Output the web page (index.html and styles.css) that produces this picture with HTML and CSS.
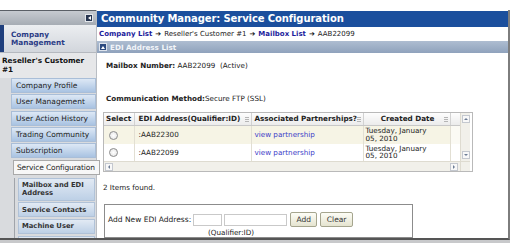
FILE: index.html
```html
<!DOCTYPE html>
<html lang="en">
<head>
    <meta charset="UTF-8">
    <title>Community Manager: Service Configuration</title>
    <link rel="stylesheet" href="styles.css">
</head>
<body>

    <div class="app">
        <div class="side">
            <div class="side-top"><span class="collapse"></span></div>
            <div class="company">Company Management</div>
            <div class="customer">Reseller's Customer #1</div>
            <ul class="nav">
                <li>Company Profile</li>
                <li>User Management</li>
                <li>User Action History</li>
                <li>Trading Community</li>
                <li>Subscription</li>
                <li class="on">Service Configuration</li>
            </ul>
            <ul class="subnav">
                <li>Mailbox and EDI Address</li>
                <li>Service Contacts</li>
                <li>Machine User</li>
                <li></li>
            </ul>
        </div>

        <div class="main">
            <div class="title">Community Manager: Service Configuration</div>
            <div class="crumbs">
                <a href="#">Company List</a><span class="arrow">&#10132;</span>Reseller's Customer #1<span class="arrow">&#10132;</span><a href="#">Mailbox List</a><span class="arrow">&#10132;</span>AAB22099
            </div>
            <div class="panel-head"><span class="toggle"></span>EDI Address List</div>
            <div class="panel-body">
                <p class="mailbox"><b>Mailbox Number:</b> AAB22099&nbsp; (Active)</p>
                <p class="method"><b>Communication Method:</b>Secure FTP (SSL)</p>

                <div class="grid">
                    <table>
                        <colgroup>
                            <col style="width:30px">
                            <col style="width:117px">
                            <col style="width:112px">
                            <col style="width:87px">
                            <col style="width:10px">
                        </colgroup>
                        <tr class="head">
                            <th>Select</th>
                            <th class="edi">EDI Address(Qualifier:ID)<span class="sort"></span></th>
                            <th class="assoc">Associated Partnerships?<span class="sort"></span></th>
                            <th class="created">Created Date<span class="sort"></span></th>
                            <th class="blank"></th>
                        </tr>
                        <tr class="odd">
                            <td class="sel"><span class="radio"></span></td>
                            <td class="edi">:AAB22300</td>
                            <td class="assoc"><a href="#">view partnership</a></td>
                            <td class="date">Tuesday, January 05, 2010</td>
                            <td class="blank"></td>
                        </tr>
                        <tr>
                            <td class="sel"><span class="radio"></span></td>
                            <td class="edi">:AAB22099</td>
                            <td class="assoc"><a href="#">view partnership</a></td>
                            <td class="date">Tuesday, January 05, 2010</td>
                            <td class="blank"></td>
                        </tr>
                    </table>
                    <div class="vscroll"><span class="arr up"></span><span class="arr down"></span></div>
                    <div class="hscroll"><span class="arr left"></span><span class="arr right"></span></div>
                    <div class="corner"></div>
                </div>

                <p class="found">2 Items found.</p>

                <div class="add-box">
                    <div class="add-row">
                        <label>Add New EDI Address:</label>
                        <input class="q" type="text">
                        <input class="id" type="text">
                        <button class="add">Add</button>
                        <button class="clear">Clear</button>
                    </div>
                    <div class="hint">(Qualifier:ID)</div>
                </div>
            </div>
        </div>
    </div>
    <div class="foot"></div>

</body>
</html>
```

FILE: styles.css
```css
*{
    margin: 0;
    padding: 0;
}

ul{
    list-style: none;
}

body{
    padding-top: 10px;
    background: #fff;
    color: #222;
    font-family: "DejaVu Sans", Verdana, sans-serif;
}

.app{
    display: flex;
    width: 510px;
    height: 230px;
    box-sizing: border-box;
    border-right: 2px solid #7d7d7d;
    border-bottom: 2px solid #555;
    overflow: hidden;
}

/* left menu */
.side{
    flex: none;
    width: 96px;
    background: #d9dbde;
    border-top: 1px solid #5a5f66;
}

.side-top{
    display: flex;
    justify-content: flex-end;
    align-items: center;
    height: 14px;
    padding-right: 3px;
    background: linear-gradient(#c6cad0, #a6acb4);
}

.collapse{
    display: flex;
    justify-content: center;
    align-items: center;
    width: 6px;
    height: 6px;
    background: #26344f;
    border: 1px solid #e3e6eb;
}

.collapse:after{
    content: '';
    border-right: 3px solid #fff;
    border-top: 2px solid transparent;
    border-bottom: 2px solid transparent;
}

.company{
    height: 27px;
    box-sizing: border-box;
    padding: 6px 0 0 7px;
    border-left: 4px solid #1f3f7d;
    background: linear-gradient(#eceef1, #d2d6dc);
    color: #2b3c86;
    font-size: 7.3px;
    font-weight: bold;
    line-height: 8px;
}

.customer{
    height: 26px;
    box-sizing: border-box;
    padding: 3px 4px 0 2px;
    border-top: 1px solid #b5b9bf;
    background: #e6e7e9;
    color: #111;
    font-size: 7.3px;
    font-weight: bold;
    line-height: 9px;
}

.nav{
    padding-left: 11px;
}

.nav li{
    height: 15px;
    box-sizing: border-box;
    margin-bottom: 1.3px;
    padding-left: 4px;
    border: 1px solid #a9bed8;
    background: linear-gradient(#dde8f5, #a9c3e2);
    color: #1e1e1e;
    font-size: 7.5px;
    line-height: 13px;
    white-space: nowrap;
}

.nav li.on{
    position: relative;
    z-index: 1;
    margin: 1.5px -4px 0 2px;
    padding-left: 3px;
    border-color: #a9a9a9;
    background: #f7f7f7;
    letter-spacing: -0.15px;
}

.subnav{
    margin: 3px 0 0 14px;
    padding: 0 1px 0 3px;
    border-left: 1px solid #a0a4aa;
}

.subnav li{
    display: flex;
    align-items: center;
    min-height: 15px;
    box-sizing: border-box;
    margin-bottom: 1.7px;
    padding: 2px 2px 2px 3px;
    border: 1px solid #b0c2d8;
    background: linear-gradient(#e2eaf4, #bdd0e6);
    color: #333;
    font-size: 6.8px;
    font-weight: bold;
    line-height: 8.5px;
}

/* right part */
.main{
    flex: 1;
    min-width: 0;
    padding-top: 1px;
    border-left: 1px solid #b9bdc3;
}

.title{
    height: 16px;
    padding-left: 4px;
    background: #1b4f9d;
    color: #fff;
    font-size: 10px;
    font-weight: bold;
    line-height: 16px;
    letter-spacing: -0.1px;
    white-space: nowrap;
}

.crumbs{
    height: 14px;
    padding-left: 2px;
    font-size: 7px;
    line-height: 14px;
    white-space: nowrap;
}

.crumbs a{
    color: #1c1c9c;
    font-weight: bold;
    text-decoration: none;
}

.crumbs .arrow{
    margin: 0 3px;
    color: #111;
}

.panel-head{
    display: flex;
    align-items: center;
    gap: 3px;
    height: 12px;
    padding-left: 2px;
    background: linear-gradient(#aebdd1, #8fa2bc);
    color: #f2f5f9;
    font-size: 7.2px;
    font-weight: bold;
}

.toggle{
    display: flex;
    justify-content: center;
    align-items: center;
    width: 6px;
    height: 6px;
    background: #2b4a80;
    border: 1px solid #dde3ec;
}

.toggle:after{
    content: '';
    border-bottom: 3px solid #fff;
    border-left: 2px solid transparent;
    border-right: 2px solid transparent;
}

.panel-body{
    padding: 0 6px;
    font-size: 7.2px;
}

.mailbox{
    margin: 7.5px 0 0 3px;
    line-height: 9px;
}

.method{
    margin: 24px 0 0 3px;
    line-height: 9px;
}

/* grid with fake scrollbars */
.grid{
    display: grid;
    grid-template-columns: 356px 10px;
    grid-template-rows: 48px 10px;
    width: 368px;
    margin-top: 9.5px;
    border: 1px solid #b9b9b9;
}

.grid table{
    width: 356px;
    height: 48px;
    table-layout: fixed;
    border-collapse: collapse;
}

.grid th{
    position: relative;
    height: 12px;
    padding: 0 0 0 2px;
    border-right: 1px solid #d2d2d2;
    border-bottom: 1px solid #c8c8c8;
    background: linear-gradient(#fdfdfd, #ebebeb);
    font-weight: bold;
    line-height: 12px;
    text-align: left;
    white-space: nowrap;
    overflow: hidden;
}

.grid td{
    height: 17px;
    padding: 0;
    border-right: 1px solid #e2dfd3;
    line-height: 9px;
    white-space: nowrap;
}

.grid tr.odd td{
    background: #f6f4e5;
}

.grid tr.odd td.blank{
    background: #fbfaf4;
}

.grid .edi{
    padding-left: 4px;
}

.grid .assoc{
    padding-left: 3px;
}

.grid th.created{
    text-align: center;
}

.grid .blank{
    border-right: none;
}

.sort{
    position: absolute;
    top: 4px;
    right: 2px;
    width: 4px;
    height: 5px;
    background: repeating-linear-gradient(#b5b5b5 0 1px, transparent 1px 2px);
}

.radio{
    display: inline-block;
    width: 7px;
    height: 7px;
    margin-left: 5px;
    border: 1px solid #8d8d8d;
    border-radius: 50%;
    background: radial-gradient(#fff, #e2e2e2);
    vertical-align: middle;
}

.grid a{
    color: #3c3cc8;
    text-decoration: none;
}

.grid td.date{
    padding: 0 12px 0 2px;
    line-height: 7.5px;
    white-space: normal;
}

.vscroll{
    display: flex;
    flex-direction: column;
    justify-content: space-between;
    align-items: center;
    padding: 2px 0;
    border-left: 1px solid #dedbd0;
    background: #f1f0ea;
}

.hscroll{
    display: flex;
    justify-content: space-between;
    align-items: center;
    padding: 0 2px 0 1px;
    border-top: 1px solid #dedbd0;
    background: #f1f0ea;
}

.corner{
    border-top: 1px solid #dedbd0;
    border-left: 1px solid #dedbd0;
    background: #f1f0ea;
}

.arr{
    display: flex;
    justify-content: center;
    align-items: center;
    width: 6px;
    height: 6px;
    border: 1px solid #c4c8cf;
    background: #f8f8f8;
}

.arr:after{
    content: '';
}

.arr.up:after{
    border-bottom: 2px solid #6d7d95;
    border-left: 2px solid transparent;
    border-right: 2px solid transparent;
}

.arr.down:after{
    border-top: 2px solid #6d7d95;
    border-left: 2px solid transparent;
    border-right: 2px solid transparent;
}

.arr.left:after{
    border-right: 2px solid #6d7d95;
    border-top: 2px solid transparent;
    border-bottom: 2px solid transparent;
}

.arr.right:after{
    border-left: 2px solid #6d7d95;
    border-top: 2px solid transparent;
    border-bottom: 2px solid transparent;
}

.found{
    margin-top: 10.5px;
    line-height: 9px;
}

/* add form */
.add-box{
    width: 309px;
    height: 34px;
    box-sizing: border-box;
    margin: 12.5px 0 0 1px;
    padding: 7px 0 0 3px;
    border: 1px solid #8c8c8c;
}

.add-row{
    display: flex;
    align-items: center;
    height: 15px;
}

.add-row label{
    font-size: 7.5px;
}

.add-row input{
    height: 12px;
    box-sizing: border-box;
    margin-left: 2px;
    border: 1px solid #c9c9c9;
    font-size: 7px;
}

.add-row input.q{
    width: 29px;
}

.add-row input.id{
    width: 63px;
}

.add-row button{
    height: 15px;
    margin-left: 3px;
    border: 1px solid #a5a58e;
    border-radius: 2px;
    background: linear-gradient(#fdfdf6, #e5e4d0);
    color: #333;
    font-family: inherit;
    font-size: 7.5px;
}

.add-row button.add{
    width: 27px;
}

.add-row button.clear{
    width: 33px;
}

.hint{
    margin-top: 1px;
    padding-left: 100px;
    line-height: 9px;
}

.foot{
    width: 510px;
    height: 3px;
    background: #c8c9cb;
}
```
